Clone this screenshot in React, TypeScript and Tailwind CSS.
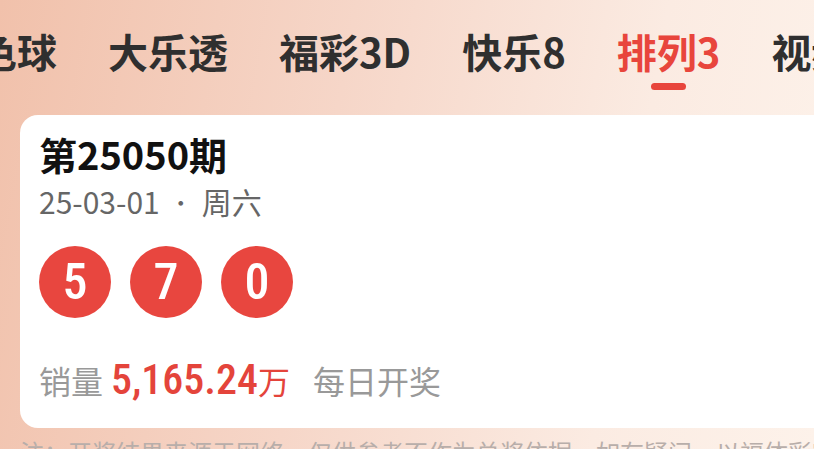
const tabs = ["双色球", "大乐透", "福彩3D", "快乐8", "排列3", "视频开奖"]

function Tab({ label, active }: { label: string; active: boolean }) {
  return (
    <div className="flex flex-col items-center shrink-0">
      <span
        className={
          "text-[40px] leading-[40px] font-bold whitespace-nowrap " +
          (active ? "text-[#e8453c]" : "text-[#2f2f2f]")
        }
      >
        {label}
      </span>
      <div className={"mt-[12px] h-[7px] w-[35px] rounded-full " + (active ? "bg-[#e8453c]" : "bg-transparent")} />
    </div>
  )
}

function Ball({ n }: { n: number }) {
  return (
    <div className="flex h-[72px] w-[72px] items-center justify-center rounded-full bg-[#e8463f]">
      <span className="font-['Liberation_Sans_Narrow','Roboto_Condensed',Roboto,sans-serif] text-[50px] leading-none font-medium text-white">
        {n}
      </span>
    </div>
  )
}

export default function App() {
  return (
    <div className="h-[449px] w-[814px] overflow-hidden bg-[linear-gradient(100deg,#f1c1ab_0%,#f6d6c8_40%,#fbebe2_75%,#fdf2ea_100%)] font-['Noto_Sans_CJK_SC',sans-serif]">
      <div className="flex h-[115px] items-start gap-[51px] pt-[31px] ml-[-63px]">
        {tabs.map((t) => (
          <Tab key={t} label={t} active={t === "排列3"} />
        ))}
      </div>

      <div className="ml-[20px] h-[313px] w-[820px] rounded-[18px] bg-white pl-[19px] pt-[20px]">
        <div className="text-[38px] leading-[38px] font-bold text-[#111]">第25050期</div>
        <div className="mt-[13px] flex items-center text-[30px] leading-[30px] text-[#666]">
          <span>25-03-01</span>
          <span className="mx-[10px] text-[22px]">·</span>
          <span>周六</span>
        </div>

        <div className="mt-[30px] flex gap-[19px]">
          <Ball n={5} />
          <Ball n={7} />
          <Ball n={0} />
        </div>

        <div className="mt-[44px] flex items-baseline text-[32px] leading-[36px] text-[#999]">
          <span>销量</span>
          <span className="ml-[8px] text-[#e4443b] font-['Liberation_Sans_Narrow','Roboto_Condensed',Roboto,sans-serif] text-[42px] font-medium">
            5,165.24
          </span>
          <span className="text-[#e4443b]">万</span>
          <span className="ml-[23px]">每日开奖</span>
        </div>
      </div>

      <div className="mt-[12px] pl-[20px] whitespace-nowrap text-[24px] leading-[24px] text-[#b8aeaa]">
        注：开奖结果来源于网络，仅供参考不作为兑奖依据，如有疑问，以福体彩官方数据为准
      </div>
    </div>
  )
}
